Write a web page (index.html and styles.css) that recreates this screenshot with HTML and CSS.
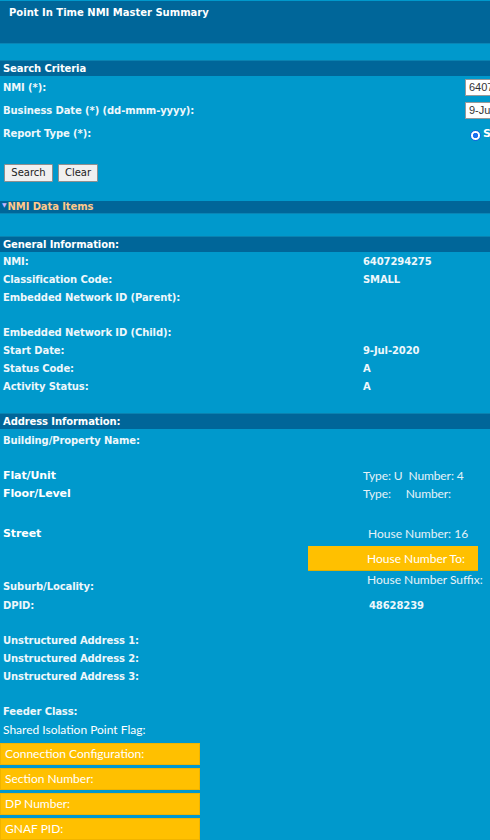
FILE: index.html
```html
<!DOCTYPE html>
<html>
<head>
<meta charset="utf-8">
<link rel="stylesheet" href="styles.css">
</head>
<body>
<div class="page">
  <div class="header"><span class="title">Point In Time NMI Master Summary</span></div>

  <div class="bar">Search Criteria</div>
  <div class="form-row"><span class="lbl">NMI (*):</span><span class="input">6407294275</span></div>
  <div class="form-row"><span class="lbl">Business Date (*) (dd-mmm-yyyy):</span><span class="input">9-Jul-2020</span></div>
  <div class="form-row"><span class="lbl">Report Type (*):</span><span class="radio-wrap"><span class="radio"></span><span class="radio-lbl">Summary</span></span></div>
  <div class="buttons">
    <button class="btn btn-search">Search</button>
    <button class="btn btn-clear">Clear</button>
  </div>

  <div class="bar bar-thin"><span class="tri">&#9660;</span>NMI Data Items</div>

  <div class="bar bar-gen">General Information:</div>
  <div class="rows">
    <div class="row"><span class="lbl">NMI:</span><span class="val">6407294275</span></div>
    <div class="row"><span class="lbl">Classification Code:</span><span class="val">SMALL</span></div>
    <div class="row"><span class="lbl">Embedded Network ID (Parent):</span><span class="val"></span></div>
    <div class="row blank"></div>
    <div class="row"><span class="lbl">Embedded Network ID (Child):</span><span class="val"></span></div>
    <div class="row"><span class="lbl">Start Date:</span><span class="val">9-Jul-2020</span></div>
    <div class="row"><span class="lbl">Status Code:</span><span class="val">A</span></div>
    <div class="row"><span class="lbl">Activity Status:</span><span class="val">A</span></div>
  </div>

  <div class="bar bar-addr">Address Information:</div>
  <div class="rows rows-addr">
    <div class="row"><span class="lbl">Building/Property Name:</span></div>
    <div class="row blank"></div>
    <div class="row"><span class="lbl big">Flat/Unit</span><span class="val soft">Type: U&nbsp;&nbsp;Number: 4</span></div>
    <div class="row"><span class="lbl big">Floor/Level</span><span class="val soft">Type:&nbsp;&nbsp;&nbsp;&nbsp;&nbsp;Number:</span></div>
    <div class="street">
      <div class="street-left">
        <span class="lbl big">Street</span>
        <span class="lbl">Suburb/Locality:</span>
      </div>
      <div class="street-right">
        <div class="srow"><span class="soft hn">House Number: 16</span></div>
        <div class="hl-box"><span>House Number To:</span></div>
        <div class="srow"><span class="soft hs">House Number Suffix:</span></div>
      </div>
    </div>
    <div class="row"><span class="lbl">DPID:</span><span class="val dpid">48628239</span></div>
    <div class="row blank"></div>
    <div class="row"><span class="lbl">Unstructured Address 1:</span></div>
    <div class="row"><span class="lbl">Unstructured Address 2:</span></div>
    <div class="row"><span class="lbl">Unstructured Address 3:</span></div>
    <div class="row blank"></div>
    <div class="row"><span class="lbl">Feeder Class:</span></div>
    <div class="row"><span class="lbl plain">Shared Isolation Point Flag:</span></div>
  </div>

  <div class="yellow-list">
    <div class="ybox">Connection Configuration:</div>
    <div class="ybox">Section Number:</div>
    <div class="ybox">DP Number:</div>
    <div class="ybox">GNAF PID:</div>
  </div>
</div>
</body>
</html>
```

FILE: styles.css
```css
html, body {
  margin: 0;
  padding: 0;
  background: #0099cc;
}
body {
  width: 490px;
  height: 840px;
  overflow: hidden;
  font-family: "DejaVu Sans", Verdana, sans-serif;
  font-size: 10px;
  color: #eef7fb;
}
.page {
  display: flex;
  flex-direction: column;
}
.header {
  height: 43px;
  margin-top: 1px;
  background: #006699;
  border-bottom: 1px solid #0a85b5;
  box-sizing: border-box;
  padding: 6px 0 0 9px;
}
.title {
  font-weight: bold;
  color: #ffffff;
  letter-spacing: 0;
}
.bar {
  background: #006699;
  font-weight: bold;
  color: #ffffff;
  height: 16px;
  line-height: 16px;
  padding-left: 3px;
  letter-spacing: -0.1px;
  margin-top: 16px;
  border-top: 1px solid #0a82b0;
  box-sizing: border-box;
  white-space: nowrap;
}
.form-row {
  height: 23px;
  display: flex;
  align-items: center;
  justify-content: space-between;
  font-weight: bold;
  overflow: hidden;
  white-space: nowrap;
}
.input {
  width: 40px;
  height: 17px;
  box-sizing: border-box;
  background: #ffffff;
  border: 1px solid #9a9a9a;
  color: #333;
  font-family: "Liberation Sans", Arial, sans-serif;
  font-weight: normal;
  font-size: 11px;
  line-height: 15px;
  padding-left: 3px;
  overflow: hidden;
  margin-left: auto;
  margin-right: -15px;
}
.radio-wrap {
  width: 22px;
  overflow: hidden;
  display: flex;
  align-items: center;
  gap: 2px;
  margin-left: auto;
  margin-right: -2px;
}
.radio {
  width: 11px;
  height: 11px;
  box-sizing: border-box;
  border: 1.5px solid #1565e0;
  background: radial-gradient(circle, #1a6ef0 0 2.4px, #ffffff 3px);
  border-radius: 50%;
  flex: none;
  margin-top: 4px;
}
.radio-lbl {
  font-weight: bold;
  color: #fff;
  font-size: 11px;
}
.buttons {
  display: flex;
  gap: 5px;
  padding: 19px 0 0 4px;
  height: 18px;
}
.btn {
  height: 18px;
  box-sizing: border-box;
  padding: 0;
  background: #f0f0f0;
  border: 1px solid #8f8f8f;
  border-radius: 1px;
  font-family: "DejaVu Sans", Verdana, sans-serif;
  font-size: 10px;
  color: #222;
  line-height: 16px;
}
.btn-search { width: 49px; }
.btn-clear { width: 40px; }
.bar-thin {
  margin-top: 19px;
  height: 13px;
  line-height: 12px;
  color: #ffc98a;
  padding-left: 2px;
  border-top: none;
  border-bottom: 1px solid #0a85b5;
}
.tri {
  font-size: 6px;
  color: #c8b6ff;
  vertical-align: top;
  position: relative;
  top: -2px;
  margin-right: 1px;
}
.bar-gen { margin-top: 22px; }
.bar-addr { margin-top: 18px; }
.rows {
  display: flex;
  flex-direction: column;
}
.rows-addr { padding-top: 2px; }
.row {
  height: 18px;
  display: flex;
  align-items: center;
  white-space: nowrap;
}
.row.blank { height: 17px; }
.lbl {
  padding-left: 3px;
  font-weight: bold;
  letter-spacing: -0.1px;
  width: 360px;
  flex: none;
}
.lbl.big {
  font-size: 11px;
  color: #ffffff;
}
.lbl.plain {
  font-family: Lato, "Open Sans", sans-serif;
  font-weight: normal;
  font-size: 12px;
  letter-spacing: 0;
  color: #ffffff;
}
.val {
  font-weight: bold;
  letter-spacing: -0.1px;
}
.soft {
  font-family: Lato, "Open Sans", sans-serif;
  font-size: 12px;
  font-weight: normal;
  color: #e6f2f8;
}
.dpid { padding-left: 6px; }
.street {
  display: flex;
  margin-top: 23px;
  height: 71px;
}
.street-left {
  width: 308px;
  display: flex;
  flex-direction: column;
  justify-content: space-between;
}
.street-left .lbl { height: 18px; line-height: 18px; }
.street-right {
  display: flex;
  flex-direction: column;
}
.srow {
  height: 18px;
  line-height: 18px;
  white-space: nowrap;
}
.hn { padding-left: 60px; }
.hs { padding-left: 59px; }
.hl-box {
  margin-top: 3px;
  width: 170px;
  height: 25px;
  box-sizing: border-box;
  background: #ffc000;
  border-bottom: 1px solid #e0b000;
  font-family: Lato, "Open Sans", sans-serif;
  font-size: 12px;
  color: #ffffff;
  line-height: 25px;
  padding-left: 59px;
}
.yellow-list {
  display: flex;
  flex-direction: column;
  gap: 3px;
  margin-top: 5px;
  width: 200px;
}
.ybox {
  height: 22px;
  background: #ffc000;
  border: 1px solid #f0b400;
  box-sizing: border-box;
  font-family: Lato, "Open Sans", sans-serif;
  font-size: 12px;
  color: #ffffff;
  line-height: 20px;
  padding-left: 4px;
}
```
